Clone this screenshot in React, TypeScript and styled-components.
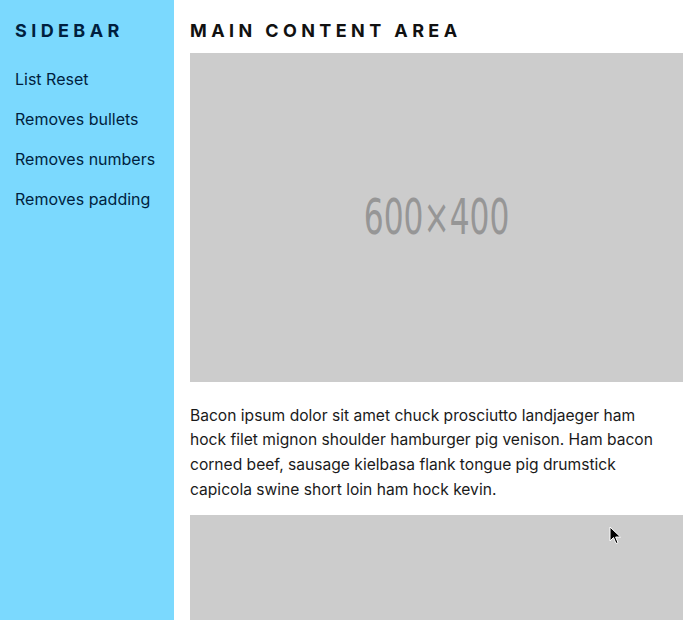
import React from "react";
import styled, { createGlobalStyle } from "styled-components";

const Global = createGlobalStyle`
  html, body { margin: 0; padding: 0; }
  body { font-family: Inter, "Noto Sans", sans-serif; background: #fff; }
`;

const Layout = styled.div`
  display: flex;
  min-height: 100vh;
  position: relative;
`;

const Sidebar = styled.aside`
  width: 174px;
  flex: none;
  background: #7bd9fe;
  color: #001f3f;
  padding: 19px 15px;
  box-sizing: border-box;
`;

const Heading = styled.h2<{ $dark?: boolean }>`
  margin: 0;
  font-size: 18px;
  line-height: 24px;
  font-weight: 700;
  letter-spacing: 4.4px;
  text-transform: uppercase;
  color: ${(p) => (p.$dark ? "#111" : "#001f3f")};
`;

const NavList = styled.ul`
  list-style: none;
  margin: 25px 0 0;
  padding: 0;
  display: flex;
  flex-direction: column;
  gap: 18px;
`;

const NavItem = styled.li`
  font-size: 16px;
  line-height: 22px;
`;

const Main = styled.main`
  flex: 1;
  padding: 19px 17px 0 16px;
  display: flex;
  flex-direction: column;
`;

const Placeholder = styled.div<{ $first?: boolean }>`
  margin-top: ${(p) => (p.$first ? "10px" : "0")};
  width: 100%;
  aspect-ratio: 3 / 2;
  background: #cccccc;
  display: flex;
  align-items: center;
  justify-content: center;
  flex: none;
`;

const PlaceholderText = styled.span`
  font-family: "DejaVu Sans Condensed", "DejaVu Sans", sans-serif;
  font-size: 49px;
  color: #969696;
  display: inline-block;
  transform: scaleX(0.71);
`;

const Paragraph = styled.p`
  margin: 22px 0 13px;
  padding-right: 12px;
  font-size: 15.6px;
  line-height: 24.7px;
  color: #1a1a1a;
`;

const Cursor = styled.svg`
  position: absolute;
  left: 609px;
  top: 526px;
  pointer-events: none;
`;

export default function App() {
  return (
    <>
      <Global />
      <Layout>
        <Sidebar>
          <Heading>Sidebar</Heading>
          <NavList>
            <NavItem>List Reset</NavItem>
            <NavItem>Removes bullets</NavItem>
            <NavItem>Removes numbers</NavItem>
            <NavItem>Removes padding</NavItem>
          </NavList>
        </Sidebar>
        <Main>
          <Heading $dark>Main Content Area</Heading>
          <Placeholder $first>
            <PlaceholderText>600×400</PlaceholderText>
          </Placeholder>
          <Paragraph>
            Bacon ipsum dolor sit amet chuck prosciutto landjaeger ham hock filet mignon shoulder
            hamburger pig venison. Ham bacon corned beef, sausage kielbasa flank tongue pig drumstick
            capicola swine short loin ham hock kevin.
          </Paragraph>
          <Placeholder>
            <PlaceholderText>600×400</PlaceholderText>
          </Placeholder>
        </Main>
        <Cursor width="14" height="20" viewBox="0 0 14 20">
          <path d="M1 1 L1 15 L4.5 11.5 L7 17.5 L9 16.7 L6.6 11 L11.5 11 Z" fill="#000" stroke="#fff" strokeWidth="1" strokeLinejoin="round" />
        </Cursor>
      </Layout>
    </>
  );
}
